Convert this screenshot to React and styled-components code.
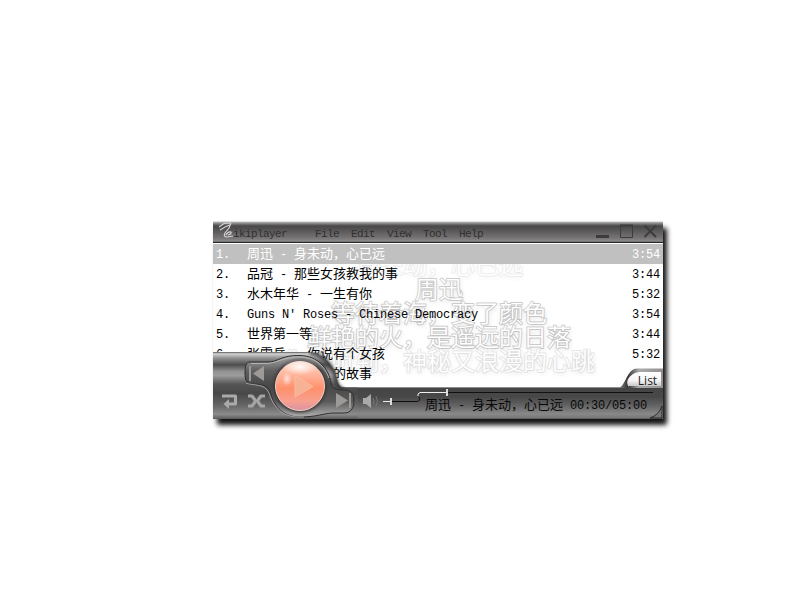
import React from "react";
import styled, { createGlobalStyle } from "styled-components";

const Global = createGlobalStyle`
  body { margin: 0; background: #fff; overflow: hidden; }
`;

const Desktop = styled.main`
  box-sizing: border-box;
  width: 800px;
  height: 600px;
  padding: 222px 0 0 213px;
  background: #fff;
`;

const PlayerWindow = styled.section`
  position: relative;
  display: flex;
  flex-direction: column;
  width: 450px;
  height: 197px;
  background: #fff;
  border-radius: 1px 1px 2px 2px;
  box-shadow: 4px 6px 5px rgba(10, 10, 10, 0.95), 0 -1px 1px #ddd;
  font-family: "Liberation Mono", "Noto Sans CJK SC", monospace;
`;

const TitleBar = styled.header`
  box-sizing: border-box;
  display: flex;
  align-items: flex-start;
  flex: 0 0 21px;
  padding-left: 6px;
  border-bottom: 1px solid #272727;
  background: linear-gradient(#b8b4b4 0, #777474 2px, #494848 4px, #575556 8px, #777475 16px, #8a8788 19px, #686667 20px);
`;

const Logo = styled.svg`
  display: block;
  width: 15px;
  height: 18px;
`;

const Brand = styled.span`
  width: 81px;
  padding-top: 5px;
  margin-left: -1px;
  font: 11px/14px "Liberation Mono", monospace;
  letter-spacing: -0.6px;
  color: #303030;
`;

const Menu = styled.nav`
  display: flex;
  gap: 12px;
  flex: 1;
  padding-top: 5px;
  margin-left: 1px;
  font: 11px/14px "Liberation Mono", monospace;
  letter-spacing: -0.6px;
  color: #303030;
`;

const WindowIcons = styled.svg`
  width: 62px;
  height: 18px;
  margin-right: 6px;
`;

const Playlist = styled.div`
  position: relative;
  flex: 0 0 144px;
  overflow: hidden;
`;

const Lyrics = styled.div`
  position: absolute;
  top: 9px;
  left: 50px;
  width: 352px;
  text-align: center;
`;

const LyricLine = styled.div`
  height: 24px;
  white-space: nowrap;
  font: 350 24px/24px "Noto Sans CJK SC", sans-serif;
  color: #fff;
  -webkit-text-stroke: 1.8px ${(p) => p.$edge};
  paint-order: stroke fill;
  text-shadow: 1px 2px 5px rgba(0, 0, 0, ${(p) => p.$shade});
`;

const Rows = styled.div`
  position: relative;
  padding-top: 1px;
`;

const Track = styled.div`
  display: grid;
  grid-template-columns: 31px 1fr auto;
  box-sizing: border-box;
  height: 20px;
  padding: 0 3px;
  background: ${(p) => (p.$active ? "#c0c0c0" : "transparent")};
  color: ${(p) => (p.$active ? "#fff" : "#000")};
`;

const SongText = styled.span`
  display: block;
  height: 18px;
  white-space: pre;
  font-family: "Noto Sans CJK SC", sans-serif;
  font-size: 13px;
  font-weight: 400;
  line-height: 18px;
`;

const Latin = styled.span`
  font-family: "Liberation Mono", monospace;
  font-size: 12px;
  letter-spacing: -0.2px;
  line-height: 1;
`;

const Footer = styled.footer`
  box-sizing: border-box;
  display: flex;
  position: relative;
  flex: 0 0 32px;
  padding-left: 145px;
  border-top: 1px solid #8c8c8c;
  background: linear-gradient(#454545 0, #484848 9px, #656565 18px, #898989 26px, #777 30px, #4b4b4b 31px);
`;

const Controls = styled.svg`
  position: absolute;
  left: 0;
  bottom: 0;
  width: 145px;
  height: 67px;
`;

const Sliders = styled.svg`
  width: 305px;
  height: 31px;
`;

const NowPlaying = styled.div`
  position: absolute;
  top: 7px;
  left: 212px;
  color: #080808;
`;

const ListTab = styled.button`
  position: absolute;
  right: 0;
  bottom: 31px;
  width: 44px;
  height: 20px;
  padding: 0 0 0 11px;
  border: 0;
  background: transparent;
  font: 12px/16px "Open Sans", sans-serif;
  color: #222;
`;

const TabShape = styled.svg`
  position: absolute;
  inset: 0;
  width: 44px;
  height: 20px;
`;

const TabLabel = styled.span`
  position: relative;
  top: 3px;
  left: 1px;
`;

const tracks = [
  ["周迅 - 身未动，心已远", "3:54"],
  ["品冠 - 那些女孩教我的事", "3:44"],
  ["水木年华 - 一生有你", "5:32"],
  ["Guns N' Roses - Chinese Democracy", "3:54"],
  ["世界第一等", "3:44"],
  ["张震岳 - 你说有个女孩", "5:32"],
  ["罗大佑 - 光阴的故事", "3:44"],
];

const lyrics = [
  ["身未动，心已远", "#f1f1f1", 0.08],
  ["周迅", "#d2d2d2", 0.15],
  ["等待着海，变了颜色", "#d0d0d0", 0.16],
  ["鲜艳的火，是遥远的日落", "#d0d0d0", 0.16],
  ["你可听到，神秘又浪漫的心跳", "#e9e9e9", 0.12],
];

function Song({ children }) {
  return (
    <SongText>
      {children.split(/([\x20-\x7e]+)/).map((part, i) =>
        i % 2 ? <Latin key={i}>{part}</Latin> : part
      )}
    </SongText>
  );
}

function ControlDeck() {
  return (
    <Controls viewBox="213 352 145 67" aria-label="Playback controls">
      <defs>
        <linearGradient id="deck" x1="0" y1="352" x2="0" y2="419" gradientUnits="userSpaceOnUse">
          <stop offset="0" stopColor="#8c8c8c" />
          <stop offset=".03" stopColor="#d0d0d0" />
          <stop offset=".09" stopColor="#929292" />
          <stop offset=".19" stopColor="#4d4d4d" />
          <stop offset=".29" stopColor="#929292" />
          <stop offset=".35" stopColor="#9c9c9c" />
          <stop offset=".48" stopColor="#555" />
          <stop offset=".62" stopColor="#484848" />
          <stop offset=".8" stopColor="#666" />
          <stop offset=".93" stopColor="#8b8b8b" />
          <stop offset="1" stopColor="#5a5a5a" />
        </linearGradient>
        <linearGradient id="socket" x1="0" y1="355" x2="0" y2="417" gradientUnits="userSpaceOnUse">
          <stop offset="0" stopColor="#aaa" />
          <stop offset=".25" stopColor="#606060" />
          <stop offset=".5" stopColor="#484848" />
          <stop offset=".75" stopColor="#5a5a5a" />
          <stop offset="1" stopColor="#b0b0b0" />
        </linearGradient>
        <linearGradient id="orange" x1="0" y1="361" x2="0" y2="411" gradientUnits="userSpaceOnUse">
          <stop offset="0" stopColor="#ffd8c8" />
          <stop offset=".3" stopColor="#ffb298" />
          <stop offset=".55" stopColor="#ff906c" />
          <stop offset=".8" stopColor="#f8a08f" />
          <stop offset="1" stopColor="#dc91a3" />
        </linearGradient>
        <radialGradient id="shine">
          <stop offset="0" stopColor="#fff" stopOpacity=".9" />
          <stop offset="1" stopColor="#fff" stopOpacity="0" />
        </radialGradient>
        <filter id="soft"><feGaussianBlur stdDeviation="1.5" /></filter>
      </defs>
      <path d="M213 352.5H309C320 353 328 360 334 370C338 377 336 387 344 387.5H358V419H215L213 417Z" fill="url(#deck)" />
      <path d="M310 353C320 354 328 360 333 370C337 377 335 388 344 389" fill="none" stroke="#393939" strokeWidth="3" filter="url(#soft)" />
      <path d="M213 352.5H307" stroke="#777" />
      <path
        d="M250 362H269C277 362 282 355 300 355.5C318 356 329 369 331 383C332 389 336 390 345 390C352 390 354 395 354 401C354 409 350 413 344 413H334C324 413 317 417 300 417C281 417 273 404 270 391C268 386 262 384 252 384C246 384 245 379 245 373C245 366 246 362 250 362Z"
        fill="url(#socket)" stroke="#303030" strokeWidth="1"
      />
      <path d="M246 383C253 386 265 383 269 393C276 415 291 418 304 417" fill="none" stroke="#b5b5b5" strokeWidth=".8" />
      <path d="M251 363.5H268C280 362 283 357 300 357C315 357 324 365 329 378" fill="none" stroke="#b9b9b9" strokeWidth=".9" />
      <circle cx="300" cy="386" r="26.5" fill="#3d3333" filter="url(#soft)" />
      <circle cx="300" cy="386" r="24.5" fill="url(#orange)" stroke="#ead5cd" strokeWidth="1" />
      <ellipse cx="300" cy="367" rx="17" ry="8" fill="url(#shine)" />
      <ellipse cx="287" cy="379" rx="5" ry="7" fill="url(#shine)" opacity=".7" />
      <path d="M295 376V397L313 386.5Z" fill="#f5b295" stroke="#ffc3a6" strokeWidth=".7" />
      <g fill="#9c9996">
        <path d="M249 366H251V381H249ZM264 366V381L253 373.5Z" />
        <path d="M336 393L348 400.5L336 408ZM349 393H351V408H349Z" />
      </g>
      <path d="M222 396H235.5V404H228" fill="none" stroke="#aaa" strokeWidth="3" strokeLinejoin="round" />
      <path d="M229 399V409L223.5 404Z" fill="#aaa" />
      <g fill="none" stroke="#a5a5a5" strokeWidth="3.2" strokeLinejoin="round">
        <path d="M248 396H252L255 400V402L252 406H248" />
        <path d="M265 396H261L258 400V402L261 406H265" />
        <path d="M254 401H259" strokeWidth="2" />
      </g>
    </Controls>
  );
}

export default function App() {
  return (
    <>
      <Global />
      <Desktop>
        <PlayerWindow>
          <TitleBar>
            <Logo viewBox="219 222 15 18" fill="none" stroke="#d3d1d1" strokeWidth="1.2">
              <path d="M219 227L224 223.5L231 223M220 230L225 227L230 225" />
              <path d="M231 223L229 228L225 233Q223 237 227 237L233 236M226 235Q228 231 231 232Q232 234 228 235" />
            </Logo>
            <Brand>ikiplayer</Brand>
            <Menu>{["File", "Edit", "View", "Tool", "Help"].map((item) => <span key={item}>{item}</span>)}</Menu>
            <WindowIcons viewBox="595 222 62 18" fill="none" stroke="#3c3c3c">
              <path d="M596 236.5H609" strokeWidth="3" />
              <path d="M620.5 225.5H632.5V237.5H620.5Z" />
              <path d="M620 225.5H633" strokeWidth="2" />
              <path d="M644.5 225.5L656 237M656 225.5L644.5 237" strokeWidth="2" />
            </WindowIcons>
          </TitleBar>
          <Playlist>
            <Lyrics>
              {lyrics.map(([line, edge, shade]) => <LyricLine key={line} $edge={edge} $shade={shade}>{line}</LyricLine>)}
            </Lyrics>
            <Rows>
              {tracks.map(([name, time], i) => (
                <Track key={name} $active={i === 0}>
                  <Song>{`${i + 1}.`}</Song>
                  <Song>{name}</Song>
                  {i < 6 && <Song>{time}</Song>}
                </Track>
              ))}
            </Rows>
          </Playlist>
          <Footer>
            <Sliders viewBox="358 388 305 31" fill="none">
              <path d="M363 398H366L371 394V408L366 404H363Z" fill="#aaa" />
              <path d="M373 398Q375 401 373 404M376 396Q379 401 376 406" stroke="#777" />
              <path d="M392 401.5H417Q421 401 419 397" stroke="#111" />
              <path d="M383 401.5H391M418 396V394L420 392.5H446" stroke="#eee" />
              <path d="M447 392.5H653" stroke="#111" />
              <path d="M391 398V405M447 389V396" stroke="#ddd" strokeWidth="2" />
              <path d="M650 418Q659 415 662 406V418Z" fill="#777" stroke="#292929" />
            </Sliders>
            <NowPlaying><Song>周迅 - 身未动，心已远 00:30/05:00</Song></NowPlaying>
            <ControlDeck />
            <ListTab>
              <TabShape viewBox="619 368 44 20">
                <defs>
                  <linearGradient id="tab" x1="0" y1="0" x2="0" y2="1">
                    <stop stopColor="#fff" /><stop offset=".55" stopColor="#f5f5f5" /><stop offset="1" stopColor="#c2c2c2" />
                  </linearGradient>
                  <linearGradient id="tabedge">
                    <stop stopColor="#888" /><stop offset=".2" stopColor="#333" /><stop offset=".45" stopColor="#aaa" /><stop offset="1" stopColor="#968f92" />
                  </linearGradient>
                </defs>
                <path d="M619 388C626 385 627 369 637 368.5H663V388Z" fill="url(#tabedge)" />
                <path d="M629 387C624 381 631 372 641 372H661V386H629Z" fill="url(#tab)" />
              </TabShape>
              <TabLabel>List</TabLabel>
            </ListTab>
          </Footer>
        </PlayerWindow>
      </Desktop>
    </>
  );
}
